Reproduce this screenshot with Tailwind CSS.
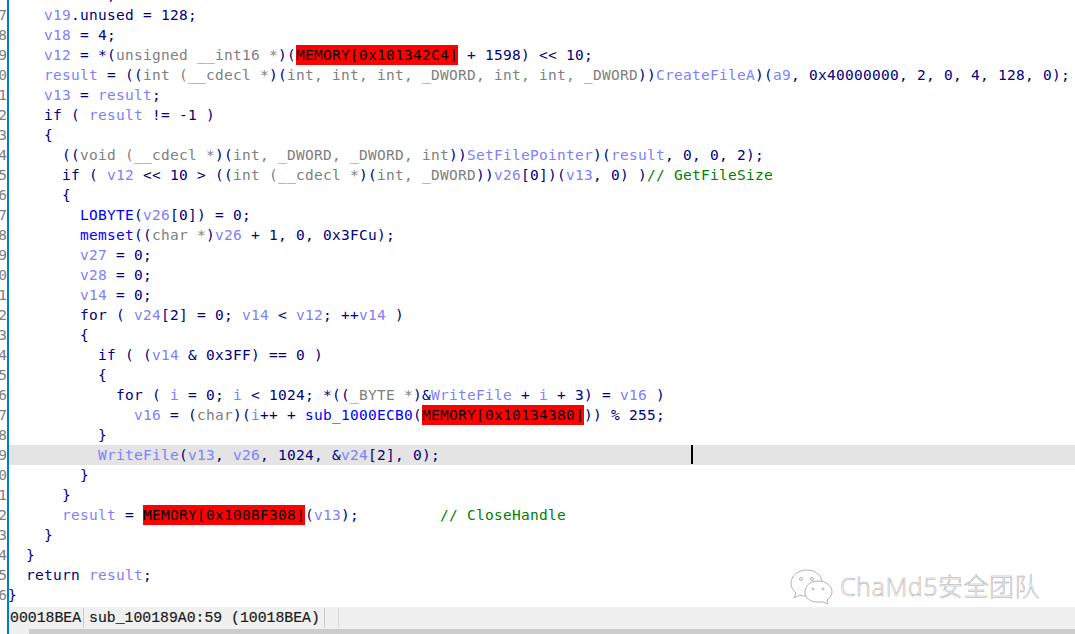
<!DOCTYPE html>
<html><head><meta charset="utf-8"><script src="https://cdn.jsdelivr.net/npm/@tailwindcss/browser@4"></script></head>
<body class="bg-white overflow-hidden">
<div class="relative w-[1075px] h-[634px] overflow-hidden bg-white flex flex-col">
  <div class="flex-1 min-h-0 flex overflow-hidden">
    <div class="w-[7px] shrink-0 overflow-hidden flex flex-col items-end -mt-[15px] font-['DejaVu_Sans_Mono',monospace] text-[14.5px] leading-[20px] text-[#808080]">
      <div>6</div><div>7</div><div>8</div><div>9</div><div>0</div><div>1</div><div>2</div><div>3</div><div>4</div><div>5</div><div>6</div><div>7</div><div>8</div><div>9</div><div>0</div><div>1</div><div>2</div><div>3</div><div>4</div><div>5</div><div>6</div><div>7</div><div>8</div><div>9</div><div>0</div><div>1</div><div>2</div><div>3</div><div>4</div><div>5</div><div>6</div>
    </div>
    <div class="w-[2px] shrink-0 bg-[#0078d7]"></div>
    <div class="flex-1 min-w-0 -mt-[15px] font-['DejaVu_Sans_Mono',monospace] text-[14.5px] leading-[20px] tracking-[0.27px] text-[#000080] overflow-hidden [&>div]:whitespace-pre [&>div]:h-[20px]">
      <div class="-ml-[1px]">    <span class="text-[#8080ff]">v17</span> = 0;</div>
      <div class="-ml-[1px]">    <span class="text-[#8080ff]">v19</span>.unused = 128;</div>
      <div class="-ml-[1px]">    <span class="text-[#8080ff]">v18</span> = 4;</div>
      <div class="-ml-[1px]">    <span class="text-[#8080ff]">v12</span> = *(<span class="text-[#808080]">unsigned __int16 *</span>)(<span class="inline-block h-[20px] bg-[#ff0000] text-black">MEMORY[0x101342C4]</span> + 1598) &lt;&lt; 10;</div>
      <div class="-ml-[1px]">    <span class="text-[#8080ff]">result</span> = ((<span class="text-[#808080]">int (__cdecl *</span>)(<span class="text-[#808080]">int, int, int, _DWORD, int, int, _DWORD</span>))<span class="text-[#8080ff]">CreateFileA</span>)(<span class="text-[#8080ff]">a9</span>, 0x40000000, 2, 0, 4, 128, 0);</div>
      <div class="-ml-[1px]">    <span class="text-[#8080ff]">v13</span> = <span class="text-[#8080ff]">result</span>;</div>
      <div class="-ml-[1px]">    if ( <span class="text-[#8080ff]">result</span> != -1 )</div>
      <div class="-ml-[1px]">    {</div>
      <div class="-ml-[1px]">      ((<span class="text-[#808080]">void (__cdecl *</span>)(<span class="text-[#808080]">int, _DWORD, _DWORD, int</span>))<span class="text-[#8080ff]">SetFilePointer</span>)(<span class="text-[#8080ff]">result</span>, 0, 0, 2);</div>
      <div class="-ml-[1px]">      if ( <span class="text-[#8080ff]">v12</span> &lt;&lt; 10 &gt; ((<span class="text-[#808080]">int (__cdecl *</span>)(<span class="text-[#808080]">int, _DWORD</span>))<span class="text-[#8080ff]">v26</span>[0])(<span class="text-[#8080ff]">v13</span>, 0) )<span class="text-[#008000]">// GetFileSize</span></div>
      <div class="-ml-[1px]">      {</div>
      <div class="-ml-[1px]">        <span class="text-[#0000ff]">LOBYTE</span>(<span class="text-[#8080ff]">v26</span>[0]) = 0;</div>
      <div class="-ml-[1px]">        <span class="text-[#0000ff]">memset</span>((<span class="text-[#808080]">char *</span>)<span class="text-[#8080ff]">v26</span> + 1, 0, 0x3FCu);</div>
      <div class="-ml-[1px]">        <span class="text-[#8080ff]">v27</span> = 0;</div>
      <div class="-ml-[1px]">        <span class="text-[#8080ff]">v28</span> = 0;</div>
      <div class="-ml-[1px]">        <span class="text-[#8080ff]">v14</span> = 0;</div>
      <div class="-ml-[1px]">        for ( <span class="text-[#8080ff]">v24</span>[2] = 0; <span class="text-[#8080ff]">v14</span> &lt; <span class="text-[#8080ff]">v12</span>; ++<span class="text-[#8080ff]">v14</span> )</div>
      <div class="-ml-[1px]">        {</div>
      <div class="-ml-[1px]">          if ( (<span class="text-[#8080ff]">v14</span> &amp; 0x3FF) == 0 )</div>
      <div class="-ml-[1px]">          {</div>
      <div class="-ml-[1px]">            for ( <span class="text-[#8080ff]">i</span> = 0; <span class="text-[#8080ff]">i</span> &lt; 1024; *((<span class="text-[#808080]">_BYTE *</span>)&amp;<span class="text-[#8080ff]">WriteFile</span> + <span class="text-[#8080ff]">i</span> + 3) = <span class="text-[#8080ff]">v16</span> )</div>
      <div class="-ml-[1px]">              <span class="text-[#8080ff]">v16</span> = (<span class="text-[#808080]">char</span>)(<span class="text-[#8080ff]">i</span>++ + <span class="text-[#0000ff]">sub_1000ECB0</span>(<span class="inline-block h-[20px] bg-[#ff0000] text-black">MEMORY[0x10134380]</span>)) % 255;</div>
      <div class="-ml-[1px]">          }</div>
      <div class="bg-[#e4e4e4] [text-indent:-1px]">          <span class="text-[#8080ff]">WriteFile</span>(<span class="text-[#8080ff]">v13</span>, <span class="text-[#8080ff]">v26</span>, 1024, &amp;<span class="text-[#8080ff]">v24</span>[2], 0);</div>
      <div class="-ml-[1px]">        }</div>
      <div class="-ml-[1px]">      }</div>
      <div class="-ml-[1px]">      <span class="text-[#8080ff]">result</span> = <span class="inline-block h-[20px] bg-[#ff0000] text-black">MEMORY[0x100BF308]</span>(<span class="text-[#8080ff]">v13</span>);         <span class="text-[#008000]">// CloseHandle</span></div>
      <div class="-ml-[1px]">    }</div>
      <div class="-ml-[1px]">  }</div>
      <div class="-ml-[1px]">  return <span class="text-[#8080ff]">result</span>;</div>
      <div class="-ml-[1px]">}</div>
    </div>
  </div>
  <div class="h-[22px] shrink-0 flex bg-[#f0f0f0] font-['Liberation_Mono',monospace] text-[14.8px] text-[#1a1a1a] [-webkit-text-stroke:0.2px_#1a1a1a]">
    <div class="w-[7px] bg-white shrink-0"></div><div class="w-[2px] bg-[#0078d7] shrink-0"></div>
    <div class="w-[75px] pl-[1px] border-r border-[#c8c8c8] h-[20px] mt-[1px] leading-[21px]">00018BEA</div>
    <div class="w-[241px] pl-[5px] border-r border-[#c8c8c8] h-[20px] mt-[1px] leading-[21px] whitespace-pre">sub_100189A0:59 (10018BEA)</div>
    <div class="w-[14px] border-r border-[#d8d8d8] h-[20px] mt-[1px]"></div>
  </div>
  <div class="h-[5px] shrink-0 flex bg-[#f0f0f0]">
    <div class="w-[7px] bg-white"></div><div class="w-[2px] bg-[#0078d7]"></div>
    <div class="w-[20px]"></div><div class="flex-1 bg-[#cdcdcd]"></div>
  </div>
  <div class="absolute left-[691px] top-[445px] w-[2px] h-[19px] bg-black"></div>
  <div class="absolute left-[790px] top-[568px] flex items-center gap-[6px]">
    <svg width="44" height="36" viewBox="0 0 44 36" fill="none" stroke="#b0b0b0" stroke-width="1"><path d="M17 2C8 2 1 8 1 15c0 4 2 7 5 10l-2 5 6-3c2 1 4 1 6 1" fill="#fff"/><path d="M17 2c8 0 14 5 15 11" /><path d="M28 13c-8 0-13 5-13 11s5 10 13 10c2 0 3 0 5 0l5 2-1-4c3-2 5-5 5-8 0-6-6-11-14-11z" fill="#fff"/><circle cx="11" cy="11" r="1.5"/><circle cx="22" cy="11" r="1.5"/><circle cx="23" cy="21" r="1"/><circle cx="33" cy="21" r="1"/></svg>
    <span class="font-['Noto_Sans','Noto_Sans_CJK_SC',sans-serif] font-light text-[25px] leading-[36px] text-white tracking-[0.5px] [-webkit-text-stroke:0.5px_#a8a8a8]">ChaMd5安全团队</span>
  </div>
</div>
</body></html>
